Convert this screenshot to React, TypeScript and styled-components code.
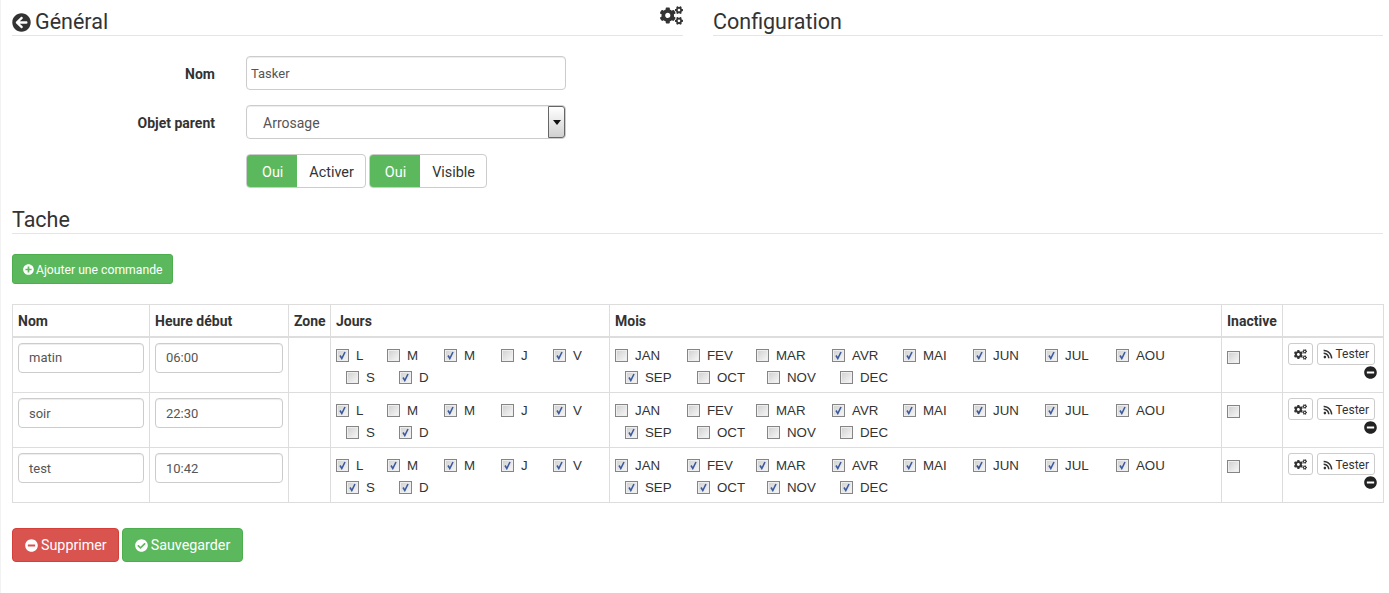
import React from "react";
import styled, { createGlobalStyle } from "styled-components";
import {
  FaArrowCircleLeft,
  FaCheckCircle,
  FaCogs,
  FaMinusCircle,
  FaPlusCircle,
  FaRss,
} from "react-icons/fa";

const GlobalStyle = createGlobalStyle`
  html, body {
    margin: 0;
    padding: 0;
    background: #fff;
  }
  body {
    font-family: Roboto, "Liberation Sans", sans-serif;
    font-size: 14px;
    color: #333;
  }
`;

const Page = styled.div`
  min-height: 593px;
  box-sizing: border-box;
  padding: 0 6px 0 12px;
  box-shadow: inset 1px 0 0 #f2f2f2;
`;

const Columns = styled.div`
  display: grid;
  grid-template-columns: 671px 670px;
  column-gap: 30px;
`;

const Heading = styled.h3`
  position: relative;
  display: flex;
  align-items: center;
  gap: 4px;
  margin: 0;
  height: 36px;
  box-sizing: border-box;
  padding-top: 9px;
  font-size: 21.5px;
  font-weight: 400;
  line-height: 26px;
  color: #333;
  border-bottom: 1px solid #e5e5e5;
`;

const GearLink = styled.span`
  position: absolute;
  right: 0;
  top: 4px;
  font-size: 23px;
  line-height: 1;
  color: #333;
`;

const FormRow = styled.div`
  display: flex;
  align-items: center;
  margin-top: ${(p: { $top: number }) => p.$top}px;
`;

const Label = styled.label`
  width: 203px;
  padding-top: 2px;
  text-align: right;
  font-weight: 700;
  font-size: 14px;
`;

const Field = styled.div`
  margin-left: 31px;
  display: flex;
`;

const TextBox = styled.div`
  box-sizing: border-box;
  width: 320px;
  height: 34px;
  padding: 0 4px;
  display: flex;
  align-items: center;
  background: #fff;
  border: 1px solid #ccc;
  border-radius: 4px;
  box-shadow: inset 0 1px 1px rgba(0, 0, 0, 0.075);
  font-size: 13px;
  color: #555;
`;

const SelectBox = styled(TextBox)`
  position: relative;
  padding: 2px 16px 0;
  font-size: 14px;
`;

const SelectArrow = styled.span`
  position: absolute;
  right: 0;
  top: 0;
  bottom: 0;
  width: 17px;
  box-sizing: border-box;
  display: flex;
  align-items: center;
  justify-content: center;
  background: linear-gradient(#fff, #d0d0d0);
  border: 1px solid #666;
  border-radius: 0 3px 3px 0;

  &::after {
    content: "";
    border-left: 4px solid transparent;
    border-right: 4px solid transparent;
    border-top: 5px solid #111;
  }
`;

const Toggle = styled.div`
  display: flex;
  box-sizing: border-box;
  height: 34px;
  margin-right: 3px;
  border: 1px solid #ccc;
  border-radius: 4px;
  overflow: hidden;
  background: #fff;
  font-size: 14.4px;
`;

const ToggleOn = styled.span`
  display: flex;
  align-items: center;
  padding: 2px 14px 0 15px;
  background: #5cb85c;
  color: #fff;
`;

const ToggleOff = styled.span`
  display: flex;
  align-items: center;
  padding: 2px 11px 0 12px;
  color: #333;
`;

const Section = styled.div`
  margin-top: 12px;
`;

const TaskHeading = styled(Heading)`
  height: 34px;
  padding-top: 7px;
`;

const SmallGreen = styled.button`
  display: inline-flex;
  align-items: center;
  gap: 2px;
  box-sizing: border-box;
  height: 30px;
  margin-top: 20px;
  padding: 1px 10px 0;
  background: #5cb85c;
  border: 1px solid #4cae4c;
  border-radius: 3px;
  color: #fff;
  font: 400 12.2px Roboto, sans-serif;

  svg {
    margin-top: -1px;
  }
`;

const CheckRow = styled.div`
  display: flex;
  height: 22px;
  align-items: center;
  margin-left: ${(p: { $indent: number }) => p.$indent}px;
`;

const Table = styled.table`
  width: 1371px;
  margin-top: 20px;
  table-layout: fixed;
  border-collapse: collapse;
  font-size: 14px;

  tbody tr:first-child td {
    height: 56px;
  }

  tbody tr:first-child ${CheckRow}:first-child {
    margin-top: 1px;
  }
`;

const Th = styled.th`
  height: 32px;
  box-sizing: border-box;
  padding: 2px 5px 0;
  text-align: left;
  font-weight: 700;
  white-space: nowrap;
  border: 1px solid #ddd;
  border-bottom: 2px solid #ddd;
`;

const Td = styled.td`
  height: 55px;
  box-sizing: border-box;
  padding: 6px 5px 0;
  vertical-align: top;
  border: 1px solid #ddd;
`;

const CellInput = styled(TextBox)`
  width: 100%;
  height: 30px;
  margin-top: -1px;
  padding: 0 10px;
  font-size: 13px;
`;

const CheckItem = styled.span`
  display: inline-flex;
  align-items: center;
  gap: 7px;
  width: ${(p: { $width: number }) => p.$width}px;
  flex: none;
  font-family: "Liberation Sans", Arial, sans-serif;
  font-size: 13.3px;
  color: #333;
`;

const Box = styled.span`
  display: inline-flex;
  align-items: center;
  justify-content: center;
  flex: none;
  box-sizing: border-box;
  width: 13px;
  height: 13px;
  background: linear-gradient(135deg, #cfcfcf, #f8f8f8);
  border: 1px solid #858585;
  box-shadow: inset 0 0 0 1px #eee;
`;

const InactiveBox = styled(Box)`
  margin-top: 3px;
`;

const Tick = styled.svg`
  width: 9px;
  height: 9px;
  fill: none;
  stroke: #3c5a9e;
  stroke-width: 1.6;
`;

const ActionCell = styled.div`
  display: flex;
  justify-content: flex-end;
  gap: 4px;
  margin-top: -1px;
  padding-right: 3px;
`;

const MiniButton = styled.button`
  display: inline-flex;
  align-items: center;
  gap: 3px;
  box-sizing: border-box;
  height: 22px;
  padding: 1px 5px 0;
  background: #fff;
  border: 1px solid #ccc;
  border-radius: 3px;
  color: #333;
  font: 400 12px Roboto, sans-serif;
`;

const RemoveRow = styled.div`
  display: flex;
  justify-content: flex-end;
  margin-top: 1px;
  padding-right: 1px;
  font-size: 13px;
  line-height: 13px;
  color: #222;
`;

const Footer = styled.div`
  display: flex;
  gap: 3px;
  margin-top: 25px;
`;

const BigButton = styled.button<{ $danger?: boolean }>`
  display: inline-flex;
  align-items: center;
  gap: 3px;
  box-sizing: border-box;
  height: 34px;
  padding: 0 ${(p) => (p.$danger ? 11 : 12)}px 0 12px;
  background: ${(p) => (p.$danger ? "#d9534f" : "#5cb85c")};
  border: 1px solid ${(p) => (p.$danger ? "#d43f3a" : "#4cae4c")};
  border-radius: 4px;
  color: #fff;
  font: 400 14.3px Roboto, sans-serif;
`;

type Opt = { label: string; width: number };

const DAYS: Opt[][] = [
  [
    { label: "L", width: 51 },
    { label: "M", width: 57 },
    { label: "M", width: 57 },
    { label: "J", width: 52 },
    { label: "V", width: 40 },
  ],
  [
    { label: "S", width: 53 },
    { label: "D", width: 40 },
  ],
];

const MONTHS: Opt[][] = [
  [
    { label: "JAN", width: 72 },
    { label: "FEV", width: 69 },
    { label: "MAR", width: 76 },
    { label: "AVR", width: 71 },
    { label: "MAI", width: 70 },
    { label: "JUN", width: 72 },
    { label: "JUL", width: 71 },
    { label: "AOU", width: 60 },
  ],
  [
    { label: "SEP", width: 72 },
    { label: "OCT", width: 70 },
    { label: "NOV", width: 73 },
    { label: "DEC", width: 60 },
  ],
];

const TASKS = [
  {
    name: "matin",
    start: "06:00",
    days: [[1, 0, 1, 0, 1], [0, 1]],
    months: [[0, 0, 0, 1, 1, 1, 1, 1], [1, 0, 0, 0]],
  },
  {
    name: "soir",
    start: "22:30",
    days: [[1, 0, 1, 0, 1], [0, 1]],
    months: [[0, 0, 0, 1, 1, 1, 1, 1], [1, 0, 0, 0]],
  },
  {
    name: "test",
    start: "10:42",
    days: [[1, 1, 1, 1, 1], [1, 1]],
    months: [[1, 1, 1, 1, 1, 1, 1, 1], [1, 1, 1, 1]],
  },
];

const CheckGroup: React.FC<{ rows: Opt[][]; values: number[][]; indent: number }> = ({
  rows,
  values,
  indent,
}) => (
  <>
    {rows.map((row, r) => (
      <CheckRow key={r} $indent={r === 0 ? 0 : indent}>
        {row.map((opt, i) => (
          <CheckItem key={i} $width={opt.width}>
            <Box>
              {values[r][i] ? (
                <Tick viewBox="0 0 9 9">
                  <path d="M2 4.5 L3.8 7.5 L7 1" />
                </Tick>
              ) : null}
            </Box>
            {opt.label}
          </CheckItem>
        ))}
      </CheckRow>
    ))}
  </>
);

const App: React.FC = () => (
  <Page>
    <GlobalStyle />
    <Columns>
      <div>
        <Heading>
          <FaArrowCircleLeft size={19} />
          Général
          <GearLink>
            <FaCogs />
          </GearLink>
        </Heading>
        <FormRow $top={20}>
          <Label>Nom</Label>
          <Field>
            <TextBox>Tasker</TextBox>
          </Field>
        </FormRow>
        <FormRow $top={15}>
          <Label>Objet parent</Label>
          <Field>
            <SelectBox>
              Arrosage
              <SelectArrow />
            </SelectBox>
          </Field>
        </FormRow>
        <FormRow $top={15}>
          <Label />
          <Field>
            <Toggle>
              <ToggleOn>Oui</ToggleOn>
              <ToggleOff>Activer</ToggleOff>
            </Toggle>
            <Toggle>
              <ToggleOn>Oui</ToggleOn>
              <ToggleOff>Visible</ToggleOff>
            </Toggle>
          </Field>
        </FormRow>
      </div>
      <div>
        <Heading>Configuration</Heading>
      </div>
    </Columns>
    <Section>
      <TaskHeading>Tache</TaskHeading>
      <SmallGreen>
        <FaPlusCircle size={11} />
        Ajouter une commande
      </SmallGreen>
      <Table>
        <colgroup>
          <col style={{ width: 137 }} />
          <col style={{ width: 139 }} />
          <col style={{ width: 42 }} />
          <col style={{ width: 279 }} />
          <col style={{ width: 612 }} />
          <col style={{ width: 61 }} />
          <col style={{ width: 101 }} />
        </colgroup>
        <thead>
          <tr>
            <Th>Nom</Th>
            <Th>Heure début</Th>
            <Th>Zone</Th>
            <Th>Jours</Th>
            <Th>Mois</Th>
            <Th>Inactive</Th>
            <Th />
          </tr>
        </thead>
        <tbody>
          {TASKS.map((task) => (
            <tr key={task.name}>
              <Td>
                <CellInput>{task.name}</CellInput>
              </Td>
              <Td>
                <CellInput>{task.start}</CellInput>
              </Td>
              <Td />
              <Td>
                <CheckGroup rows={DAYS} values={task.days} indent={10} />
              </Td>
              <Td>
                <CheckGroup rows={MONTHS} values={task.months} indent={10} />
              </Td>
              <Td>
                <CheckRow $indent={0}>
                  <InactiveBox />
                </CheckRow>
              </Td>
              <Td>
                <ActionCell>
                  <MiniButton>
                    <FaCogs size={13} />
                  </MiniButton>
                  <MiniButton>
                    <FaRss size={10} />
                    Tester
                  </MiniButton>
                </ActionCell>
                <RemoveRow>
                  <FaMinusCircle />
                </RemoveRow>
              </Td>
            </tr>
          ))}
        </tbody>
      </Table>
    </Section>
    <Footer>
      <BigButton $danger>
        <FaMinusCircle size={13} />
        Supprimer
      </BigButton>
      <BigButton>
        <FaCheckCircle size={13} />
        Sauvegarder
      </BigButton>
    </Footer>
  </Page>
);

export default App;
